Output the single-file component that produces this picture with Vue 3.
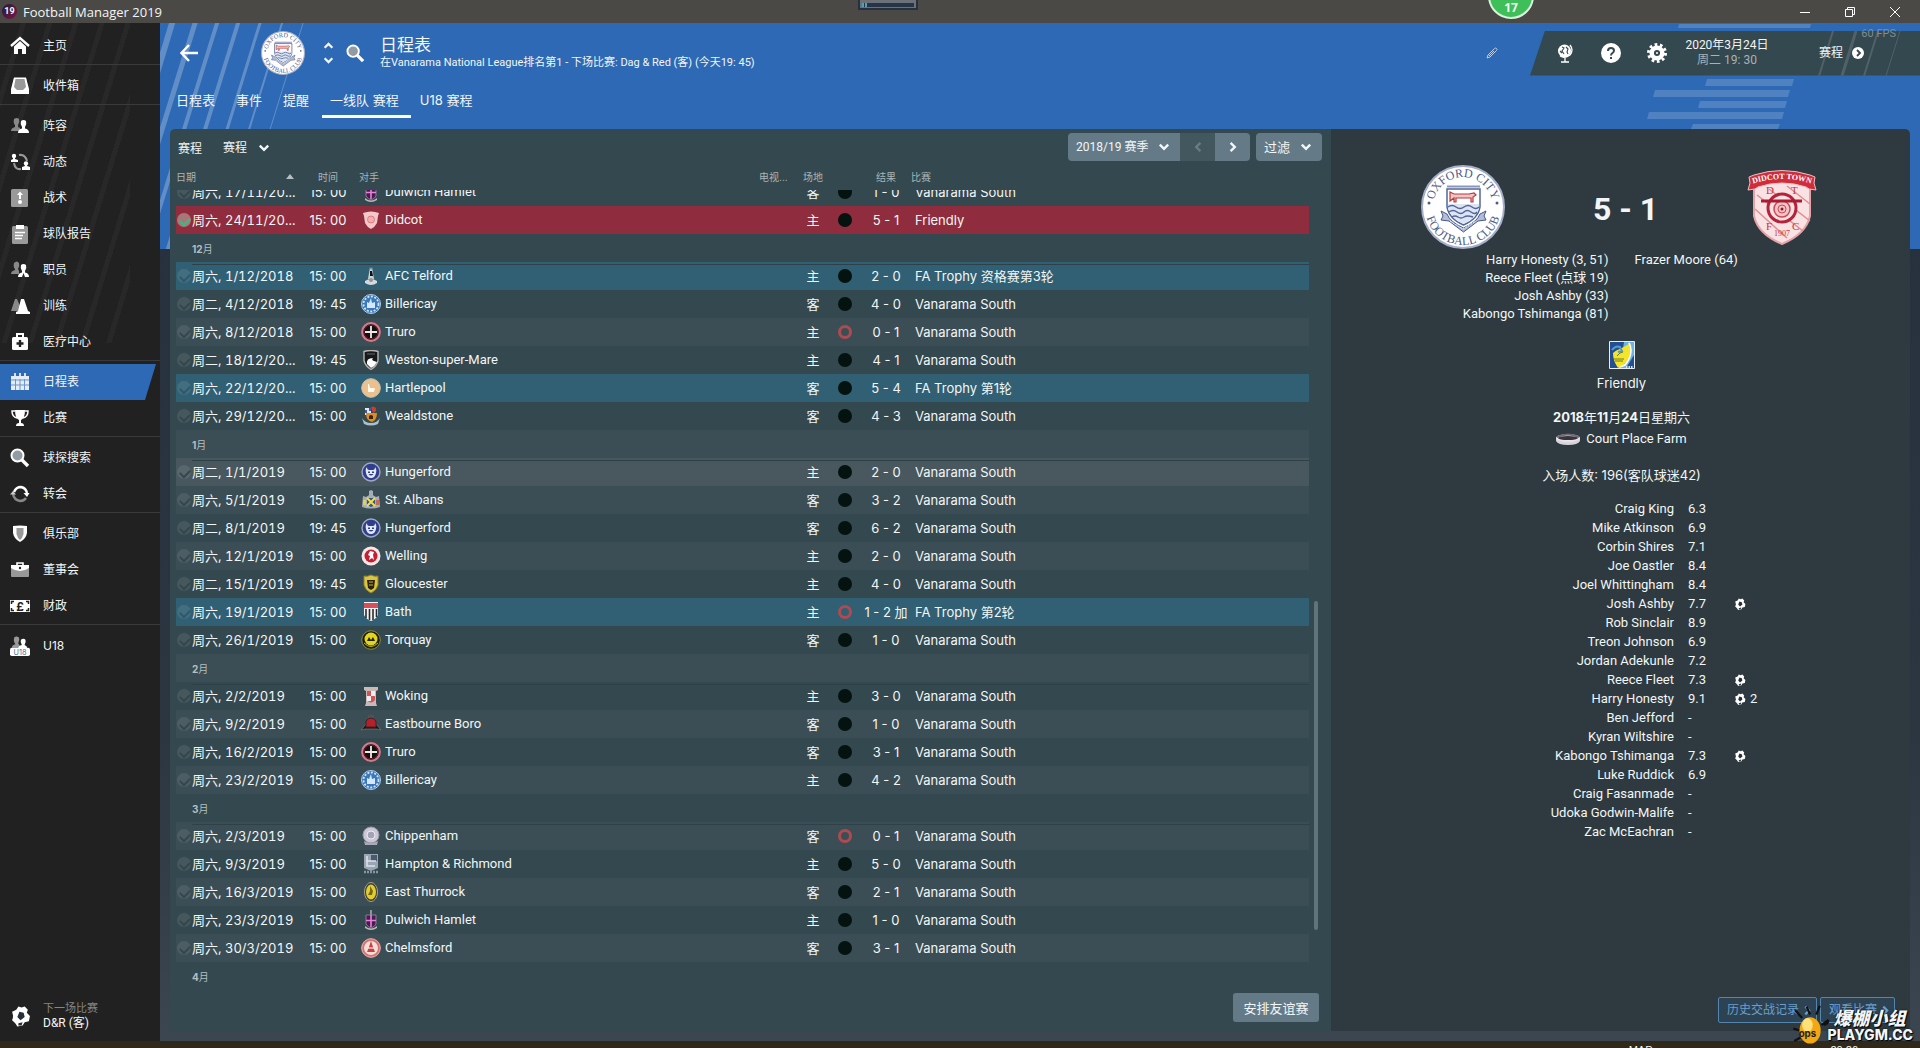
<script setup>
import { ref } from 'vue'

/* Sidebar */
const navGroups = [
  [{ icon: 'home', label: '主页' }],
  [{ icon: 'inbox', label: '收件箱' }],
  [
    { icon: 'squad', label: '阵容' },
    { icon: 'dynamics', label: '动态' },
    { icon: 'tactics', label: '战术' },
    { icon: 'report', label: '球队报告' },
    { icon: 'staff', label: '职员' },
    { icon: 'training', label: '训练' },
    { icon: 'medical', label: '医疗中心' }
  ],
  [
    { icon: 'schedule', label: '日程表', active: true },
    { icon: 'cup', label: '比赛' }
  ],
  [
    { icon: 'search', label: '球探搜索' },
    { icon: 'transfer', label: '转会' }
  ],
  [
    { icon: 'club', label: '俱乐部' },
    { icon: 'board', label: '董事会' },
    { icon: 'money', label: '财政' }
  ],
  [{ icon: 'u18', label: 'U18' }]
]

const tabs = ['日程表', '事件', '提醒', '一线队 赛程', 'U18 赛程']
const activeTab = ref('一线队 赛程')

/* Fixtures: date, time, crest, opponent, venue, result, competition, kind */
const VS = 'Vanarama South'
const fixtures = [
  ['周六, 17/11/20...', '15: 00', 'dulwich', 'Dulwich Hamlet', '客', '1 - 0', VS],
  ['周六, 24/11/20...', '15: 00', 'didcot', 'Didcot', '主', '5 - 1', 'Friendly', 'selected'],
  '12月',
  ['周六, 1/12/2018', '15: 00', 'telford', 'AFC Telford', '主', '2 - 0', 'FA Trophy 资格赛第3轮', 'trophy'],
  ['周二, 4/12/2018', '19: 45', 'billericay', 'Billericay', '客', '4 - 0', VS],
  ['周六, 8/12/2018', '15: 00', 'truro', 'Truro', '主', '0 - 1', VS, 'lost'],
  ['周二, 18/12/20...', '19: 45', 'weston', 'Weston-super-Mare', '主', '4 - 1', VS],
  ['周六, 22/12/20...', '15: 00', 'hartlepool', 'Hartlepool', '客', '5 - 4', 'FA Trophy 第1轮', 'trophy'],
  ['周六, 29/12/20...', '15: 00', 'wealdstone', 'Wealdstone', '客', '4 - 3', VS],
  '1月',
  ['周二, 1/1/2019', '15: 00', 'hungerford', 'Hungerford', '主', '2 - 0', VS, 'hovered'],
  ['周六, 5/1/2019', '15: 00', 'stalbans', 'St. Albans', '客', '3 - 2', VS],
  ['周二, 8/1/2019', '19: 45', 'hungerford', 'Hungerford', '客', '6 - 2', VS],
  ['周六, 12/1/2019', '15: 00', 'welling', 'Welling', '主', '2 - 0', VS],
  ['周二, 15/1/2019', '19: 45', 'gloucester', 'Gloucester', '主', '4 - 0', VS],
  ['周六, 19/1/2019', '15: 00', 'bath', 'Bath', '主', '1 - 2 加', 'FA Trophy 第2轮', 'trophy lost'],
  ['周六, 26/1/2019', '15: 00', 'torquay', 'Torquay', '客', '1 - 0', VS],
  '2月',
  ['周六, 2/2/2019', '15: 00', 'woking', 'Woking', '主', '3 - 0', VS],
  ['周六, 9/2/2019', '15: 00', 'eastbourne', 'Eastbourne Boro', '客', '1 - 0', VS],
  ['周六, 16/2/2019', '15: 00', 'truro', 'Truro', '客', '3 - 1', VS],
  ['周六, 23/2/2019', '15: 00', 'billericay', 'Billericay', '主', '4 - 2', VS],
  '3月',
  ['周六, 2/3/2019', '15: 00', 'chippenham', 'Chippenham', '客', '0 - 1', VS, 'lost'],
  ['周六, 9/3/2019', '15: 00', 'hampton', 'Hampton & Richmond', '主', '5 - 0', VS],
  ['周六, 16/3/2019', '15: 00', 'thurrock', 'East Thurrock', '客', '2 - 1', VS],
  ['周六, 23/3/2019', '15: 00', 'dulwich', 'Dulwich Hamlet', '主', '1 - 0', VS],
  ['周六, 30/3/2019', '15: 00', 'chelmsford', 'Chelmsford', '客', '3 - 1', VS],
  '4月'
]

const rows = fixtures.map((f, i) => {
  if (typeof f === 'string') return { id: i, month: f }
  const [date, time, crest, opponent, venue, result, competition, kind = ''] = f
  return { id: i, date, time, crest, opponent, venue, result, competition, kind, lost: kind.includes('lost') }
})

/* Match details */
const homeScorers = ['Harry Honesty (3, 51)', 'Reece Fleet (点球 19)', 'Josh Ashby (33)', 'Kabongo Tshimanga (81)']
const players = [
  { name: 'Craig King', rating: '6.3' },
  { name: 'Mike Atkinson', rating: '6.9' },
  { name: 'Corbin Shires', rating: '7.1' },
  { name: 'Joe Oastler', rating: '8.4' },
  { name: 'Joel Whittingham', rating: '8.4' },
  { name: 'Josh Ashby', rating: '7.7', goals: 1 },
  { name: 'Rob Sinclair', rating: '8.9' },
  { name: 'Treon Johnson', rating: '6.9' },
  { name: 'Jordan Adekunle', rating: '7.2' },
  { name: 'Reece Fleet', rating: '7.3', goals: 1 },
  { name: 'Harry Honesty', rating: '9.1', goals: 2 },
  { name: 'Ben Jefford', rating: '-' },
  { name: 'Kyran Wiltshire', rating: '-' },
  { name: 'Kabongo Tshimanga', rating: '7.3', goals: 1 },
  { name: 'Luke Ruddick', rating: '6.9' },
  { name: 'Craig Fasanmade', rating: '-' },
  { name: 'Udoka Godwin-Malife', rating: '-' },
  { name: 'Zac McEachran', rating: '-' }
]
</script>

<template>
  <!-- icon and crest library -->
  <svg class="library" aria-hidden="true">
    <defs>
      <symbol id="i-home" viewBox="0 0 20 20"><path d="M1 10 10 2l9 8" fill="none" stroke="#fff" stroke-width="2.4" /><path d="M4 10.500 10 5l6 5.500V18h-4v-5H8v5H4z" fill="#fff" /></symbol>
      <symbol id="i-inbox" viewBox="0 0 20 20"><path d="M4 2h12l2 10-3 3H5l-3-3z" fill="#999" /><path d="M4 1.500h12L19 13v5H1v-5zM5.500 3 4 11l3 3h6l3-3-1.500-8z" fill="#fff" fill-rule="evenodd" /></symbol>
      <symbol id="i-squad" viewBox="0 0 20 20"><path d="M4 3q3-2 5 0 1 3-1 6v2l2 1v3H1q0-3 4-4V9Q3 7 4 3z" fill="#888" /><path d="M11 5q2.500-2 5 0 1 3-1 6v1.500q4 .5 4 4.500H8q0-4 4-4.500V11q-2-3-1-6z" fill="#fff" /></symbol>
      <symbol id="i-dynamics" viewBox="0 0 20 20"><path d="M9 3q6-1 8 6M11 17q-6 1-7-6" fill="none" stroke="#999" stroke-width="2" /><circle cx="4" cy="4" r="2.200" fill="#fff" /><path d="M3 5h2v2l3 1v2H1V8l2-1zM15 12h2v2l3 1v3h-8v-3l3-1z" fill="#fff" /><circle cx="16" cy="11.500" r="2.200" fill="#fff" /></symbol>
      <symbol id="i-tactics" viewBox="0 0 20 20"><rect x="1" y="1" width="17" height="18" rx="1.500" fill="#999" /><path d="M10 3.500 13 7h-2v4H9V7H7z" fill="#fff" /><circle cx="10" cy="14" r="2" fill="#fff" /></symbol>
      <symbol id="i-report" viewBox="0 0 20 20"><rect x="2" y="2" width="16" height="18" rx="1.500" fill="#999" /><path d="M6 1h8v4H6z" fill="#fff" /><path d="M5 8.500h10M5 11.500h8M5 14.500h7" stroke="#fff" stroke-width="1.300" /></symbol>
      <symbol id="i-staff" viewBox="0 0 20 20"><path d="M4 3q3-3 5 0 1 3-1 6l1 2v3H1q0-3 4-4V9Q3 7 4 3z" fill="#888" /><path d="M11 5q2.500-2 5 0 1 3-1 6v1.500q4 .5 4 4.500h-4l-1.500-4-1.500 4H8q0-4 4-4.500V11q-2-3-1-6z" fill="#fff" /></symbol>
      <symbol id="i-training" viewBox="0 0 20 20"><path d="m5 3 2 0 4 9-3 3H1z" fill="#888" /><path d="M11 3h3l4 12 2 1v2H6v-2l2-1z" fill="#fff" /></symbol>
      <symbol id="i-medical" viewBox="0 0 20 20"><path d="M7 5V2h6v3" fill="none" stroke="#fff" stroke-width="2" /><rect x="2" y="5" width="16" height="13" rx="1.500" fill="#fff" /><path d="M10 8v7M6.500 11.500h7" stroke="#222" stroke-width="2.400" /></symbol>
      <symbol id="i-schedule" viewBox="0 0 20 20"><path d="M5 1v4M10 1v4M15 1v4" stroke="#fff" stroke-width="1.600" /><rect x="1" y="4" width="18" height="14" fill="#e4ecf6" /><path d="M1 8h18M1 13h18M5.500 7v11M10 7v11M14.500 7v11" stroke="#6d95cb" /></symbol>
      <symbol id="i-cup" viewBox="0 0 20 20"><path d="M5 3H2q0 6 5 7M15 3h3q0 6-5 7" fill="none" stroke="#fff" stroke-width="1.500" /><path d="M5 2h10q0 8-4 10v3q3 0 3 3H6q0-3 3-3v-3Q5 10 5 2z" fill="#fff" /></symbol>
      <symbol id="i-search" viewBox="0 0 20 20"><circle cx="7.500" cy="7.500" r="6" fill="#909ba3" stroke="#fff" stroke-width="2" /><path d="m12 12 6 6" stroke="#fff" stroke-width="3.400" /></symbol>
      <symbol id="i-transfer" viewBox="0 0 20 20"><path d="M4 8q2-5 7-5 5 1 6 6" fill="none" stroke="#fff" stroke-width="2.400" /><path d="M13.500 9h6L17 13z" fill="#fff" /><path d="M3 10q1 6 7 7 4 0 6-3" fill="none" stroke="#888" stroke-width="2.400" /><path d="M0 10.500h6L3 7z" fill="#ccc" /></symbol>
      <symbol id="i-club" viewBox="0 0 20 20"><path d="M3 2q7-1 14 0v7q-1 6-7 9-6-3-7-9z" fill="#fff" /><path d="M6.500 4h7v6q-1 4-3.500 6-2.500-2-3.500-6z" fill="#999" /></symbol>
      <symbol id="i-board" viewBox="0 0 20 20"><path d="M7 6V3h6v3" fill="none" stroke="#fff" stroke-width="1.600" /><rect x="1" y="5" width="18" height="12" rx="1" fill="#999" /><path d="M1 5h18v3q-4 3-9 3T1 8z" fill="#fff" /><circle cx="10" cy="8" r="1.200" fill="#222" /></symbol>
      <symbol id="i-money" viewBox="0 0 20 20"><path d="M0 4h20v12H0z" fill="#fff" /><path d="M1.500 8V5.500H4M16 5.500h2.500V8M18.500 12v2.500H16M4 14.500H1.500V12" fill="none" stroke="#222" stroke-width="1.500" /><text x="10" y="14.500" font-size="12" font-weight="700" text-anchor="middle" fill="#222">£</text></symbol>
      <symbol id="i-u18" viewBox="0 0 22 22"><path d="M5 1q3-1 5 1 1 3-1 6l2 3v2H2q0-3 4-4Q3 5 5 1z" fill="#999" /><path d="M12 4q3-2 5 0 1 3-1 6 3 1 3 4H9q0-3 4-4-2-3-1-6z" fill="#fff" /><rect y="13" width="22" height="9" rx="2" fill="#fff" /><text x="11" y="20.500" font-size="8" text-anchor="middle" fill="#41739f">U18</text></symbol>
      <symbol id="i-ball" viewBox="0 0 20 20"><path d="m8 1 3 1 3-1 3 3-1 3 3 3-1 5-4 1-2 3-5 1-2-3-3-3 1-4-1-4 4-2z" fill="#fff" /><path d="m9 6 4 1 1 4-4 3-3-3zM2 9l1 2-1 2zM8 17l4-1-1 3H8z" fill="#263036" /></symbol>
      <symbol id="i-chev" viewBox="0 0 10 10"><path d="m1.500 3 3.500 3.500L8.500 3" fill="none" stroke="currentColor" stroke-width="2" /></symbol>
      <symbol id="i-next" viewBox="0 0 10 10"><path d="M3 1.500 6.500 5 3 8.500" fill="none" stroke="currentColor" stroke-width="2" /></symbol>

      <symbol id="c-dulwich" viewBox="0 0 20 20"><path d="M10 0v6" stroke="#aaa" stroke-width="1.600" /><path d="M5 5h10v9q-2 3-5 4-3-1-5-4z" fill="#4a1a52" stroke="#8a7b92" /><path d="M10 5v12M5 10.500h10" stroke="#e583d8" stroke-width="1.600" /><path d="M4 16q6 5 12 0v2q-6 4-12 0z" fill="#bbb" /></symbol>
      <symbol id="c-didcot" viewBox="0 0 20 20"><path d="M2 3q8-3 16 0l-1 3-1 7q-2 4-6 6-4-2-6-6L3 6z" fill="#f4c8cb" /><circle cx="10" cy="9.500" r="3.500" fill="#f3aeb2" stroke="#e07880" /></symbol>
      <symbol id="c-telford" viewBox="0 0 20 20"><path d="m9 1 1 3 1-3 2 12H7z" fill="#c9d2d4" /><path d="M9 5h2l1 5H9z" fill="#111" /><path d="M4 15q6-4 12 0v2q-6 4-12 0z" fill="#d5dadb" /><circle cx="10" cy="14" r="2" fill="#8b9496" /></symbol>
      <symbol id="c-billericay" viewBox="0 0 20 20"><circle cx="10" cy="10" r="9.500" fill="#3a77bb" stroke="#a9cff0" /><circle cx="10" cy="10" r="7.500" fill="none" stroke="#cfe5f8" stroke-width="1.800" stroke-dasharray="2 1.500" /><path d="m10 4 1 5 3-1v6H6V8l2 1z" fill="#d4e8fa" /></symbol>
      <symbol id="c-truro" viewBox="0 0 20 20"><circle cx="10" cy="10" r="8.800" fill="#111" stroke="#d4788a" stroke-width="2.200" /><circle cx="10" cy="10" r="7" fill="none" stroke="#71202e" /><path d="M10 4v12M4 10h12" stroke="#f2e8e8" stroke-width="1.800" /></symbol>
      <symbol id="c-weston" viewBox="0 0 20 20"><path d="M3 1.500q7-2 14 0v9q-1 5-7 9-6-4-7-9z" fill="#15191c" stroke="#b9b4aa" stroke-width="1.400" /><path d="M6 4h8" stroke="#666" /><path d="M6 14q-1-6 6-6-2 2 1 3l3 1q-2 4-6 6z" fill="#fff" /></symbol>
      <symbol id="c-hartlepool" viewBox="0 0 20 20"><circle cx="10" cy="10" r="9.300" fill="#e9c08e" stroke="#d3c3ae" /><path d="M7 6h1l1 4h5l-1 4H7z" fill="#fff8ec" /></symbol>
      <symbol id="c-wealdstone" viewBox="0 0 20 20"><path d="M4 2h6v7H4z" fill="#dfe9f5" /><path d="M4 4h2v3H4zM8 2h2v3H8z" fill="#3d5b9f" /><path d="M10 1q6-1 5 4l-3 2z" fill="#d43a2e" /><path d="M5 7h11q0 7-5 9-6-1-6-9z" fill="#dd8c1e" /><path d="M8 10q2-2 4 0v3H8z" fill="#382514" /><path d="M1 12q3 5 9 5t9-5l-2 6q-7 3-14 0z" fill="#aac0cb" /></symbol>
      <symbol id="c-hungerford" viewBox="0 0 20 20"><circle cx="10" cy="10" r="9" fill="#303f8d" stroke="#a1a8c8" stroke-width="1.400" /><path d="M6 5q0 3 2 3h4q2 0 2-3 2 2 1 6-1 5-5 5t-5-5q-1-4 1-6z" fill="#e4e8f4" /><path d="M7 9.500h2v1.500H7zM11 9.500h2v1.500h-2zM7.500 12q2.500 3 5 0z" fill="#303f8d" /></symbol>
      <symbol id="c-stalbans" viewBox="0 0 20 20"><path d="m8 1 2-1 2 1v5H8zM2 6l3 1 5-3 5 3 3-1 1 11q-9 3-18 0z" fill="#a4aebb" /><path d="M6 8h8v7l-4 2-4-2z" fill="#33528f" /><path d="m6 8 8 8M14 8l-8 8" stroke="#f2df42" stroke-width="2" /><path d="M2 10h3v5H2z" fill="#e1cf51" /><path d="M15 10h3v5h-3z" fill="#bc6d60" /></symbol>
      <symbol id="c-welling" viewBox="0 0 20 20"><circle cx="10" cy="10" r="9.500" fill="#f7e8e8" /><circle cx="10" cy="10" r="6.500" fill="#c41f32" /><path d="m9 5 4 1-1 3 1 5-2-2-3 2 1-4-2-1z" fill="#fff" /></symbol>
      <symbol id="c-gloucester" viewBox="0 0 20 20"><path d="M3 2q3 1 7-1 4 2 7 1v9q-1 5-7 8-6-3-7-8z" fill="#dcc53e" stroke="#8d8132" /><path d="M6 6h8l-1 8-3 2-3-2z" fill="#28220e" /><path d="M8 8h4M8 11h4" stroke="#c7af2e" /></symbol>
      <symbol id="c-bath" viewBox="0 0 20 20"><path d="M3 0h14v13q-2 4-7 6-5-2-7-6z" fill="#f5f2f3" /><path d="M3 1h14v5H3z" fill="#d84f5c" /><path d="M5 7v9M8.500 7v11M12 7v11M15.500 7v8" stroke="#282c31" stroke-width="1.600" /></symbol>
      <symbol id="c-torquay" viewBox="0 0 20 20"><circle cx="10" cy="10" r="9.300" fill="#1d1f11" stroke="#918e40" /><circle cx="10" cy="9" r="6.500" fill="#e3d51f" /><path d="m6 11 2-4 2 3 2-3 2 4z" fill="#24240d" /><path d="M3 13q7 7 14 0" fill="none" stroke="#c4b92c" /></symbol>
      <symbol id="c-woking" viewBox="0 0 20 20"><path d="M3 1h14v3l-2 1v12l1 3H4l1-3V5L3 4z" fill="#c9b9b7" /><path d="M6 5h8v9q-4 5-8 0z" fill="#d1545a" /><path d="M10 5h4v5h-4zM6 10h4v5H6z" fill="#eee" /></symbol>
      <symbol id="c-eastbourne" viewBox="0 0 20 20"><path d="M7 1h6v3H7z" fill="#575050" /><path d="m0 16 5-6h10l5 6-4-1H4z" fill="#1d1718" stroke="#8c8080" stroke-width=".6" /><path d="M5 7q5-6 10 0v6H5z" fill="#b5202a" stroke="#402024" /></symbol>
      <symbol id="c-chippenham" viewBox="0 0 20 20"><circle cx="10" cy="9" r="8" fill="#c9c8d4" stroke="#9895a9" /><circle cx="10" cy="9" r="4" fill="#a3a2b8" stroke="#eee" /><path d="M3 15q7 4 14 0l-1 4H4z" fill="#aaa9b8" /></symbol>
      <symbol id="c-hampton" viewBox="0 0 20 20"><path d="M3 0h14v14l-7 3-7-3z" fill="#9aa5b4" /><path d="M10 1h6v6h-6z" fill="#4c5870" /><path d="M6 2v10h8M5 7h10" fill="none" stroke="#dbe1ea" stroke-width="1.500" /><path d="M3 18h14" stroke="#8794a2" stroke-width="2.500" stroke-dasharray="2 1" /></symbol>
      <symbol id="c-thurrock" viewBox="0 0 20 20"><ellipse cx="10" cy="10" rx="6.500" ry="9.500" fill="#3a3b2c" stroke="#aaa687" /><ellipse cx="10" cy="10" rx="5" ry="7.500" fill="#e2cd2d" /><path d="m9 4 3 5-1 4H7l2-4z" fill="#756719" /></symbol>
      <symbol id="c-chelmsford" viewBox="0 0 20 20"><circle cx="10" cy="10" r="9.300" fill="#d9706c" stroke="#eab8b5" /><circle cx="10" cy="10" r="7" fill="#f3dedc" /><path d="m10 3 2 6 2 5H6l2-5z" fill="#c9413f" /><path d="M7 10h6" stroke="#fff" /></symbol>

      <symbol id="c-oxford" viewBox="0 0 84 84">
        <circle cx="42" cy="42" r="41" fill="#fff" stroke="#a5aec8" stroke-width="2" />
        <path id="arc-top" d="M12 42a30 30 0 0 1 60 0" fill="none" />
        <path id="arc-bottom" d="M4 42a38 38 0 0 0 76 0" fill="none" />
        <text font-size="12" font-family="Liberation Serif, serif" fill="#4f5c87" text-anchor="middle"><textPath href="#arc-top" startOffset="50%">OXFORD CITY</textPath></text>
        <text font-size="12" font-family="Liberation Serif, serif" fill="#4f5c87" text-anchor="middle"><textPath href="#arc-bottom" startOffset="50%">FOOTBALL CLUB</textPath></text>
        <circle cx="8" cy="38" r="1.500" fill="#4f5c87" /><circle cx="76" cy="38" r="1.500" fill="#4f5c87" />
        <path d="M26 21.500h33" stroke="#8a97bb" stroke-width="2" />
        <path d="M26 24h33v18q-2 12-16.500 18Q28 54 26 42z" fill="#fff" stroke="#53659a" stroke-width="1.500" />
        <path d="M27 39h31v5q-3 9-15.500 15Q30 53 27 44z" fill="#dbe5f3" />
        <path d="M27 42q4-3 8 0t8 0 8 0 7 0M28 47q4-3 8 0t7 0 7 0 6 0M31 52q3-2 6 0t6 0 9 0" fill="none" stroke="#53659a" stroke-width="1.500" />
        <path d="m29 27 4 2h15l5-1 2 2-3 2v5h-2v-4H35v4h-2v-4l-4 3z" fill="#f1c5c5" stroke="#b83a3e" stroke-width="1.200" />
        <path d="m20 46 6 3q3 8 16.500 14Q56 57 59 49l6-3-2 5 2 4-8 1-14.500 11L28 56l-8-1 2-4z" fill="#8091bb" fill-opacity=".6" stroke="#46588d" />
        <path d="m29 56 13 8 13-8" fill="none" stroke="#e5e9f3" stroke-dasharray="2 1" />
      </symbol>
      <symbol id="c-didcot-big" viewBox="0 0 70 76">
        <path d="M7 14q28-10 56 0v33q-4 18-28 28Q11 65 7 47z" fill="#f9e2e3" stroke="#e4a3a7" stroke-width="2" />
        <path d="m10 26 46 36M22 20l41 32M8 40l32 29M40 17l23 18" stroke="#e58b91" stroke-width="1.500" />
        <path d="m2 8 5-2q28-9 56 0l5 2-1 6 2 7-7-1-3-2q-24-8-48 0l-3 2-7 1 2-7z" fill="#cf2c3c" stroke="#f0c0c4" />
        <path id="arc-did" d="M8 14q27-8 54 0" fill="none" />
        <text font-size="8" font-weight="700" font-family="Liberation Serif, serif" fill="#fff" text-anchor="middle"><textPath href="#arc-did" startOffset="50%">DIDCOT TOWN</textPath></text>
        <circle cx="35" cy="39" r="14" fill="#f9e2e3" stroke="#b5233a" stroke-width="3" />
        <circle cx="35" cy="40" r="8" fill="#f2c4c7" stroke="#c94854" stroke-width="1.500" />
        <circle cx="35" cy="40" r="4" fill="none" stroke="#c94854" /><circle cx="35" cy="40" r="1.500" fill="#8c1b2c" />
        <path d="M14 32h41" stroke="#a71d34" stroke-width="3" />
        <g font-size="11" font-family="Liberation Serif, serif" fill="#c83444"><text x="19" y="25">D</text><text x="44" y="25">T</text><text x="19" y="61">F</text><text x="45" y="61">C</text></g>
        <text x="35" y="67" font-size="8" font-family="Liberation Serif, serif" fill="#c83444" text-anchor="middle">1907</text>
      </symbol>
    </defs>
  </svg>

  <div class="window">
    <header class="titlebar">
      <span class="app-icon">19</span>
      <span class="app-name">Football Manager 2019</span>
      <span class="dock"><i></i></span>
      <span class="counter">17</span>
      <div class="window-buttons">
        <button type="button" aria-label="最小化"><svg viewBox="0 0 12 12"><path d="M1 6.500h10" /></svg></button>
        <button type="button" aria-label="还原"><svg viewBox="0 0 12 12"><path d="M1.500 3.500h7v7h-7zM3.500 3.500v-2h7v7h-2" /></svg></button>
        <button type="button" aria-label="关闭"><svg viewBox="0 0 12 12"><path d="m1 1 10 10M11 1 1 11" /></svg></button>
      </div>
    </header>

    <div class="body">
      <aside class="sidebar">
        <nav>
          <ul v-for="(group, g) in navGroups" :key="g">
            <li v-for="item in group" :key="item.label">
              <a href="#" :class="{ active: item.active }">
                <svg><use :href="'#i-' + item.icon" /></svg>{{ item.label }}
              </a>
            </li>
          </ul>
        </nav>
        <a href="#" class="next-match">
          <svg><use href="#i-ball" /></svg>
          <span><small>下一场比赛</small>D&amp;R (客)</span>
        </a>
      </aside>

      <main class="main">
        <div class="backdrop">
          <svg class="slashes" viewBox="0 0 160 226">
            <g stroke="#fff" stroke-opacity=".25">
              <path d="M13-3-57 229" stroke-width="6" /><path d="M36-3-36 229" stroke-width="5" />
              <path d="M58-3-14 229" stroke-width="4" /><path d="M79-3 7 229" stroke-width="4" />
              <path d="M101-3 29 229" stroke-width="3" /><path d="M123-3 51 229" stroke-width="2" />
              <path d="M144-3 72 229" stroke-width="1" />
            </g>
          </svg>
          <svg class="bars" viewBox="0 0 165 106">
            <path d="M32 1h132l-1 4H31zM60 56h87l-2 7H58zM8 67h135l-2 7H6zM53 78h87l-2 7H51zM2 89h135l-2 7H0zM46 101h87l-2 5H44z" fill="#fff" fill-opacity=".17" />
          </svg>
        </div>

        <div class="topbar">
          <button type="button" class="plain back" aria-label="返回">
            <svg viewBox="0 0 18 18"><path d="M18 9H2M9 1 1.500 9 9 17" fill="none" stroke="#fff" stroke-width="2.400" /></svg>
          </button>
          <svg class="club-logo"><use href="#c-oxford" /></svg>
          <div class="stepper">
            <button type="button" class="plain" aria-label="上一个"><svg class="up"><use href="#i-chev" /></svg></button>
            <button type="button" class="plain" aria-label="下一个"><svg><use href="#i-chev" /></svg></button>
          </div>
          <button type="button" class="plain find" aria-label="搜索"><svg><use href="#i-search" /></svg></button>
          <div class="heading">
            <h1>日程表</h1>
            <p>在Vanarama National League排名第1 - 下场比赛: Dag &amp; Red (客) (今天19: 45)</p>
          </div>
          <button type="button" class="plain edit" aria-label="编辑">
            <svg viewBox="0 0 12 12"><path d="m1 11 1-3 6.500-6.500q1.500-1 2 0 1 1 0 2L4 10zM3 9l5-5" fill="none" stroke="#b8cde9" /></svg>
          </button>
          <div class="status">
            <svg class="status-lines" viewBox="0 0 90 45"><g stroke="#fff" stroke-opacity=".14"><path d="M19 0 5 45" stroke-width="2" /><path d="M42 0 28 45" stroke-width="3" /><path d="M64 0 50 45" stroke-width="2" /><path d="M86 0 72 45" /></g></svg>
            <button type="button" class="plain" aria-label="世界">
              <svg viewBox="0 0 20 20"><circle cx="9.500" cy="8" r="6.500" fill="#fff" /><path d="M7 4l2 1-2 3 2 3M11 4l2 2-1 3 1 2M5 8l2 2" fill="none" stroke="#34484f" stroke-width="1.100" /><path d="M15 2q4 5 0 10-5 4-10 1M10 15v4M6 19h8" fill="none" stroke="#fff" stroke-width="1.300" /></svg>
            </button>
            <button type="button" class="plain" aria-label="帮助">
              <svg viewBox="0 0 20 20"><circle cx="10" cy="10" r="10" fill="#fff" /><path d="M7 8q0-3 3-3t3 2.500q0 1.500-1.500 2.500T10 12.500M10 14v2" fill="none" stroke="#34484f" stroke-width="2" /></svg>
            </button>
            <button type="button" class="plain" aria-label="设置">
              <svg viewBox="0 0 20 20"><circle cx="10" cy="10" r="8.500" fill="none" stroke="#fff" stroke-width="3" stroke-dasharray="2.700 2.640" /><circle cx="10" cy="10" r="5.300" fill="none" stroke="#fff" stroke-width="4.500" /><circle cx="10" cy="10" r="1" fill="#fff" /></svg>
            </button>
            <p class="today">2020年3月24日<span>周二 19: 30</span></p>
            <a href="#" class="continue">赛程 <svg viewBox="0 0 12 12"><circle cx="6" cy="6" r="6" fill="#fff" /><path d="m5 3 3 3-3 3" fill="none" stroke="#34484f" stroke-width="1.800" /></svg></a>
          </div>
          <span class="fps">60 FPS</span>
        </div>

        <nav class="tabs">
          <a v-for="tab in tabs" :key="tab" href="#" :class="{ active: tab === activeTab }" @click.prevent="activeTab = tab">{{ tab }}</a>
        </nav>

        <div class="panels">
          <section class="fixtures">
            <div class="toolbar">
              <label for="view">赛程</label>
              <span class="pick view"><select id="view"><option>赛程</option></select><svg><use href="#i-chev" /></svg></span>
              <div class="season">
                <span class="pick"><select aria-label="赛季"><option>2018/19 赛季</option></select><svg><use href="#i-chev" /></svg></span>
                <button type="button" disabled aria-label="上一赛季"><svg class="flip"><use href="#i-next" /></svg></button>
                <button type="button" aria-label="下一赛季"><svg><use href="#i-next" /></svg></button>
              </div>
              <span class="pick filter"><select aria-label="过滤"><option>过滤</option></select><svg><use href="#i-chev" /></svg></span>
            </div>

            <div class="list">
              <table>
                <thead>
                  <tr>
                    <th class="date-head">日期<i></i></th>
                    <th class="center">时间</th>
                    <th class="opp-head">对手</th>
                    <th>电视...</th>
                    <th class="center">场地</th>
                    <th></th>
                    <th class="center">结果</th>
                    <th>比赛</th>
                  </tr>
                </thead>
                <tbody>
                  <template v-for="row in rows" :key="row.id">
                    <tr v-if="row.month" class="month"><th colspan="9"><b>{{ parseInt(row.month) }}</b>月</th></tr>
                    <tr v-else :class="row.kind">
                      <td class="tick"><input type="checkbox" :checked="row.kind === 'selected'" :aria-label="row.opponent"></td>
                      <td class="date">{{ row.date }}</td>
                      <td class="center">{{ row.time }}</td>
                      <td class="opponent"><svg><use :href="'#c-' + row.crest" /></svg>{{ row.opponent }}</td>
                      <td></td>
                      <td class="center">{{ row.venue }}</td>
                      <td class="mark"><i :class="{ ring: row.lost }"></i></td>
                      <td class="center">{{ row.result }}</td>
                      <td class="comp">{{ row.competition }}</td>
                    </tr>
                  </template>
                </tbody>
              </table>
              <div class="scroll"><i></i></div>
            </div>

            <footer>
              <button type="button" class="arrange">安排友谊赛</button>
            </footer>
          </section>

          <section class="match">
            <div class="scoreline">
              <svg class="home"><use href="#c-oxford" /></svg>
              <strong>5 - 1</strong>
              <svg class="away"><use href="#c-didcot-big" /></svg>
            </div>
            <div class="scorers">
              <ul><li v-for="s in homeScorers" :key="s">{{ s }}</li></ul>
              <ul><li>Frazer Moore (64)</li></ul>
            </div>
            <svg class="comp-logo" viewBox="0 0 26 28"><path d="M.5.5h25v27H.5z" fill="#254d91" stroke="#e8eef5" /><path d="M15 1h10v13L17 27h-6z" fill="#6fb4df" /><path d="M20 2q5 10-4 22l-6 2" fill="none" stroke="#fff" stroke-width="2" /><path d="M4 12q3-3 7-4l9-5q4 12-5 20l-6 4Q4 20 4 12z" fill="#f5e529" /><path d="M3 9q4-5 8-3l2 4-4 1" fill="none" stroke="#4c9ed1" stroke-width="2" /><path d="m8 15 3-3 3-1M5 18h10M6 20h8" fill="none" stroke="#6a7b31" /><path d="M17 26h7" stroke="#dce6f2" stroke-width="2" stroke-dasharray="1.500 1" /></svg>
            <p class="comp-name">Friendly</p>
            <p class="match-date"><b>2018</b>年<b>11</b>月<b>24</b>日星期六</p>
            <p class="ground">
              <svg viewBox="0 0 24 12"><path d="M0 5v3q2 4 12 4t12-4V5z" fill="#d9d3dc" /><ellipse cx="12" cy="5" rx="12" ry="4" fill="#e8e4ea" /><ellipse cx="12" cy="5" rx="10" ry="2" fill="#3a343c" /><path d="M1 4q11-5 22 0" fill="none" stroke="#6f6678" stroke-width="2" /></svg>
              Court Place Farm
            </p>
            <p class="crowd">入场人数: 196(客队球迷42)</p>
            <table class="ratings">
              <tbody>
                <tr v-for="p in players" :key="p.name">
                  <td>{{ p.name }}</td>
                  <td>{{ p.rating }}</td>
                  <td><span v-if="p.goals"><svg><use href="#i-ball" /></svg>{{ p.goals > 1 ? p.goals : '' }}</span></td>
                </tr>
              </tbody>
            </table>
            <div class="actions">
              <button type="button">历史交战记录<svg><use href="#i-next" /></svg></button>
              <button type="button">观看比赛<svg><use href="#i-next" /></svg></button>
            </div>
          </section>
        </div>
      </main>
    </div>

    <div class="desktop-edge"><span>MAP</span><span>20:26</span></div>

    <div class="watermark">
      <svg viewBox="0 0 44 50"><path d="m12 16-8-9M21 12l-4-9M28 12l4-10M34 24l8-6M9 30l-7-2M10 38l-7 4" stroke="#111" stroke-width="2.500" /><ellipse cx="21" cy="30" rx="12" ry="15" fill="#f3a711" /><ellipse cx="18" cy="24" rx="6" ry="8" fill="#ffe07a" /><path d="M36 22q4-6 7-3-1 5-6 6z" fill="#111" /><text x="8" y="38" font-size="11" font-weight="700" fill="#222">ops</text></svg>
      <p><em>爆棚小组</em><b>PLAYGM.CC</b></p>
    </div>
  </div>
</template>

<style>
body {
  background: #212121;
}
</style>

<style scoped>
/* general */
.library {
  position: absolute;
  width: 0;
  height: 0;
}
.window {
  position: relative;
  display: flex;
  flex-direction: column;
  min-height: 100vh;
  overflow: hidden;
  color: #f2f6f6;
  font-family: Inter, "Noto Sans CJK SC", sans-serif;
  font-size: 13px;
  line-height: 18px;
}
.window * {
  box-sizing: border-box;
}
p, h1, ul {
  margin: 0;
  padding: 0;
  list-style: none;
}
a {
  color: inherit;
  text-decoration: none;
}
button, select {
  font: inherit;
  color: inherit;
  border: 0;
  padding: 0;
}
.plain {
  display: flex;
  background: none;
}

/* title bar */
.titlebar {
  display: flex;
  align-items: center;
  height: 23px;
  padding: 0 15px 0 2px;
  background: #4b4946;
  font-family: "Open Sans", sans-serif;
}
.app-icon {
  width: 15px;
  height: 15px;
  border-radius: 50%;
  background: linear-gradient(135deg, #1d1b3c, #7c1743);
  font: 700 9px/15px Roboto, sans-serif;
  text-align: center;
}
.app-name {
  margin-left: 6px;
}
.dock {
  position: absolute;
  top: 0;
  left: 858px;
  width: 60px;
  height: 10px;
  border: 2px solid #26303f;
  border-top: 0;
  background: #6c7077;
}
.dock i {
  display: block;
  height: 4px;
  margin: 3px 2px;
  border-left: 5px double #4fa3b8;
  background: #273346;
}
.counter {
  position: absolute;
  z-index: 3;
  top: -27px;
  right: 386px;
  width: 46px;
  height: 46px;
  border: 2px solid #d9f3dc;
  border-radius: 50%;
  background: #3fbf59;
  font-weight: 700;
  font-size: 12px;
  line-height: 66px;
  text-align: center;
}
.window-buttons {
  display: flex;
  gap: 25px;
  margin-left: auto;
}
.window-buttons button {
  display: flex;
  width: 20px;
  justify-content: center;
  background: none;
}
.window-buttons svg {
  width: 12px;
  height: 12px;
  fill: none;
  stroke: #fff;
}

/* sidebar */
.body {
  flex: 1;
  display: flex;
}
.sidebar {
  width: 160px;
  display: flex;
  flex-direction: column;
  justify-content: space-between;
  padding: 5px 0 10px;
  background:
    repeating-linear-gradient(107deg, transparent 0 20px, rgba(255, 255, 255, .03) 20px 25px) 0 0 / 130px 320px no-repeat,
    #212121;
}
.sidebar ul + ul {
  border-top: 1px solid #3a3a3a;
  padding-top: 3px;
}
.sidebar li a {
  display: flex;
  align-items: center;
  gap: 13px;
  height: 36px;
  margin-right: 4px;
  padding-left: 10px;
  font-size: 12px;
}
.sidebar li a.active {
  background: #2d69b5;
  clip-path: polygon(0 0, 100% 0, calc(100% - 11px) 100%, 0 100%);
}
.sidebar li svg {
  width: 20px;
  height: 20px;
}
.next-match {
  display: flex;
  align-items: center;
  gap: 12px;
  padding-left: 10px;
  font: 12px/15px Roboto, "Noto Sans CJK SC", sans-serif;
}
.next-match svg {
  width: 21px;
  height: 22px;
}
.next-match small {
  display: block;
  font-size: 11px;
  color: #858585;
}

/* header */
.main {
  position: relative;
  flex: 1;
  min-width: 0;
  display: flex;
  flex-direction: column;
  padding: 0 10px 10px;
  background: linear-gradient(#262f3d, #2b3641 70%, #3b4650);
}
.backdrop {
  position: absolute;
  inset: 0 0 auto;
  height: 226px;
  background: #2d69b5;
}
.slashes {
  width: 160px;
  height: 226px;
}
.bars {
  position: absolute;
  top: 0;
  right: 108px;
  width: 165px;
  height: 106px;
}
.topbar, .tabs, .panels {
  position: relative;
}
.topbar {
  display: flex;
  align-items: center;
  height: 60px;
  padding-left: 10px;
}
.back svg {
  width: 18px;
  height: 18px;
}
.club-logo {
  width: 44px;
  height: 44px;
  margin-left: 63px;
}
.stepper {
  display: flex;
  flex-direction: column;
  gap: 4px;
  margin-left: 18px;
}
.stepper svg {
  width: 11px;
  height: 11px;
}
.up {
  transform: rotate(180deg);
}
.find svg {
  width: 19px;
  height: 19px;
}
.find {
  margin-left: 12px;
}
.heading {
  flex: 1;
  margin-left: 15px;
}
.heading h1 {
  font-size: 17px;
  line-height: 20px;
  font-weight: 400;
}
.heading p {
  font: 11px/16px Roboto, "Noto Sans CJK SC", sans-serif;
}
.edit svg {
  width: 12px;
  height: 12px;
}
.status {
  position: relative;
  display: flex;
  align-items: center;
  gap: 26px;
  width: 390px;
  height: 45px;
  margin: 0 -10px 0 32px;
  padding-left: 25px;
  background: #34484f;
  clip-path: polygon(15px 0, 100% 0, 100% 100%, 0 100%);
  font: 12px/15px Roboto, "Noto Sans CJK SC", sans-serif;
}
.status button svg {
  width: 20px;
  height: 20px;
}
.status-lines {
  position: absolute;
  right: 16px;
  top: 0;
  width: 90px;
  height: 45px;
}
.today {
  width: 84px;
  margin-left: -8px;
  text-align: center;
  white-space: nowrap;
}
.today span {
  display: block;
  color: #a9b3b6;
}
.continue {
  position: relative;
  display: flex;
  align-items: center;
  gap: 9px;
  margin-left: 24px;
}
.continue svg {
  width: 12px;
  height: 12px;
}
.fps {
  position: absolute;
  top: 3px;
  right: 14px;
  font: 11px/16px Roboto, sans-serif;
  color: #7f8d92;
}
.tabs {
  display: flex;
  height: 35px;
  margin-bottom: 11px;
}
.tabs a {
  position: relative;
  padding: 8px 0 0;
  margin-left: 6px;
  margin-right: 15px;
  white-space: nowrap;
}
.tabs .active::after {
  content: "";
  position: absolute;
  left: -8px;
  right: -12px;
  bottom: 0;
  height: 3px;
  background: #fff;
}

/* fixtures */
.panels {
  flex: 1;
  display: grid;
  grid-template-columns: minmax(0, 1fr) 579px;
  border-radius: 5px;
  overflow: hidden;
}
.fixtures {
  display: flex;
  flex-direction: column;
  background: #34484f;
}
.toolbar {
  display: flex;
  align-items: center;
  height: 36px;
  padding: 0 9px 0 8px;
}
.toolbar > label {
  padding-top: 3px;
  font-size: 12px;
}
.pick {
  position: relative;
  display: inline-flex;
  align-items: center;
}
.pick select {
  appearance: none;
  width: 100%;
  height: 28px;
  padding-left: 8px;
  background: none;
}
.pick svg {
  position: absolute;
  right: 10px;
  width: 12px;
  height: 12px;
  pointer-events: none;
}
.view {
  width: 55px;
  margin-left: 13px;
  padding-top: 2px;
  font-size: 12px;
}
.view svg {
  right: 0;
}
.season {
  display: flex;
  margin-left: auto;
  border-radius: 4px;
  background: #647b87;
  overflow: hidden;
}
.season .pick {
  width: 112px;
  font: 12px/18px Roboto, "Noto Sans CJK SC", sans-serif;
}
.season svg {
  width: 12px;
  height: 12px;
}
.season button {
  display: flex;
  align-items: center;
  justify-content: center;
  width: 35px;
  height: 28px;
  background: none;
}
.season button:disabled {
  background: #43575f;
  color: #6a7b82;
}
.flip {
  transform: rotate(180deg);
}
.filter {
  width: 66px;
  height: 28px;
  margin-left: 6px;
  border-radius: 4px;
  background: #647b87;
}
.list {
  display: flex;
  flex: 1;
  padding-left: 6px;
}
table {
  border-spacing: 0;
}
.list table, .list thead, .list tbody {
  display: block;
  flex: 1;
}
.list tr {
  display: grid;
  grid-template-columns: 16px 108px 56px minmax(180px, 1fr) 38px 32px 32px 50px minmax(160px, 398px);
  align-items: center;
  height: 28px;
}
.list td, .list th {
  padding: 0;
  white-space: nowrap;
  text-align: left;
}
.list .center {
  text-align: center;
}
.list thead tr {
  height: 25px;
  padding-bottom: 2px;
}
.list thead th {
  font-size: 10px;
  font-weight: 400;
  color: #a9b5b8;
}
.list .date-head {
  grid-column: span 2;
  display: flex;
  align-items: center;
  justify-content: space-between;
  padding-right: 6px;
}
.date-head i {
  border: 4px solid transparent;
  border-top: 0;
  border-bottom: 5px solid #b5bfc2;
}
.list .opp-head {
  padding-left: 3px;
}
.list tbody {
  overflow: hidden;
}
.list tbody tr:first-child {
  margin-top: -12px;
}
.list tbody tr:nth-child(even) {
  background: #3c4e55;
}
.list tbody tr.hovered {
  background: #48585e;
}
.list tbody tr.trophy {
  background: #316074;
}
.list tbody tr.selected {
  background: #8f2d3e;
}
.list .month th {
  grid-column: 2 / -1;
  align-self: stretch;
  border-bottom: 1px solid #2f4148;
  font-size: 10px;
  line-height: 30px;
  font-weight: 400;
  color: #b5bfc1;
}
.list .date {
  font-variant-numeric: tabular-nums;
}
.tick input {
  appearance: none;
  display: block;
  width: 14px;
  height: 14px;
  margin: 0 0 0 1px;
  border-radius: 50%;
  background: rgba(255, 255, 255, .09);
}
.tick input::before {
  content: "";
  display: block;
  width: 8px;
  height: 5px;
  margin: 4px 3px;
  border: solid #36474e;
  border-width: 0 0 2px 2px;
  transform: rotate(-45deg);
}
.trophy .tick input::before {
  border-color: #2f596b;
}
.tick input:checked {
  background: #a87878;
}
.tick input:checked::before {
  border-color: #2fc088;
}
.list .opponent {
  display: flex;
  align-items: center;
  gap: 4px;
  padding-left: 5px;
  font: 13px/18px Roboto, sans-serif;
}
.opponent svg {
  width: 20px;
  height: 20px;
}
.mark i {
  display: block;
  width: 14px;
  height: 14px;
  margin: 0 auto;
  border-radius: 50%;
  background: #04130f;
}
.mark .ring {
  border: 3px solid #ae4a50;
  background: none;
}
.list .comp {
  padding-left: 4px;
}
.scroll {
  width: 22px;
  display: flex;
  flex-direction: column;
  justify-content: flex-end;
  padding: 0 13px 60px 5px;
}
.scroll i {
  height: 43%;
  border-radius: 2px;
  background: #60747b;
}
.fixtures footer {
  display: flex;
  justify-content: flex-end;
  padding: 3px 12px 9px;
}
.arrange {
  width: 86px;
  height: 29px;
  border-radius: 3px;
  background: #647b87;
}

/* match details */
.match {
  display: flex;
  flex-direction: column;
  align-items: center;
  padding: 36px 15px 8px 17px;
  background: #2e3a40;
}
.scoreline {
  display: flex;
  align-items: center;
  justify-content: center;
  padding-right: 6px;
}
.home {
  width: 84px;
  height: 84px;
}
.scoreline strong {
  width: 242px;
  padding-top: 4px;
  text-align: center;
  font: 700 32px/36px Roboto, sans-serif;
}
.away {
  width: 70px;
  height: 76px;
}
.scorers {
  display: grid;
  grid-template-columns: 1fr 1fr;
  gap: 26px;
  width: 100%;
  margin-top: 2px;
}
.scorers, .ground, .ratings {
  font: 13px/18px Roboto, "Noto Sans CJK SC", sans-serif;
}
.scorers ul:first-child {
  text-align: right;
}
.comp-logo {
  width: 26px;
  height: 28px;
  margin-top: 18px;
}
.comp-name {
  margin-top: 5px;
}
.match-date {
  margin-top: 16px;
}
.ground {
  display: flex;
  align-items: center;
  gap: 6px;
  margin-top: 4px;
}
.ground svg {
  width: 24px;
  height: 12px;
}
.crowd {
  margin-top: 18px;
}
.ratings {
  width: 100%;
  margin-top: 15px;
}
.ratings td {
  height: 19px;
  padding: 0;
}
.ratings td:first-child {
  text-align: right;
}
.ratings td:nth-child(2) {
  width: 60px;
  padding-left: 14px;
}
.ratings td:last-child {
  width: 161px;
}
.ratings span {
  display: flex;
  align-items: center;
  gap: 4px;
}
.ratings svg {
  width: 12px;
  height: 12px;
}
.actions {
  display: flex;
  gap: 3px;
  margin-top: auto;
  align-self: flex-end;
}
.actions button {
  display: flex;
  align-items: center;
  gap: 3px;
  height: 26px;
  padding: 0 3px 0 8px;
  border: 1px solid #5485ae;
  border-radius: 2px;
  background: #2d4353;
  color: #6a9fcb;
  font-size: 12px;
}
.actions svg {
  width: 11px;
  height: 11px;
}

/* what lies below and over the game window */
.desktop-edge {
  display: flex;
  justify-content: flex-end;
  gap: 178px;
  height: 8px;
  padding-right: 62px;
  overflow: hidden;
  background: #30291b;
  font: 11px/18px "Liberation Sans", sans-serif;
}
.watermark {
  position: absolute;
  right: 7px;
  bottom: 7px;
  display: flex;
  align-items: flex-end;
}
.watermark svg {
  width: 42px;
  height: 44px;
  margin: 0 -4px -6px 0;
}
.watermark p {
  display: flex;
  flex-direction: column;
  text-shadow: 0 0 2px #000, 1px 1px 1px #000;
}
.watermark em {
  margin-left: 6px;
  font-size: 18px;
  line-height: 18px;
  font-weight: 900;
}
.watermark b {
  font-size: 14px;
  line-height: 14px;
  font-weight: 800;
}
</style>
